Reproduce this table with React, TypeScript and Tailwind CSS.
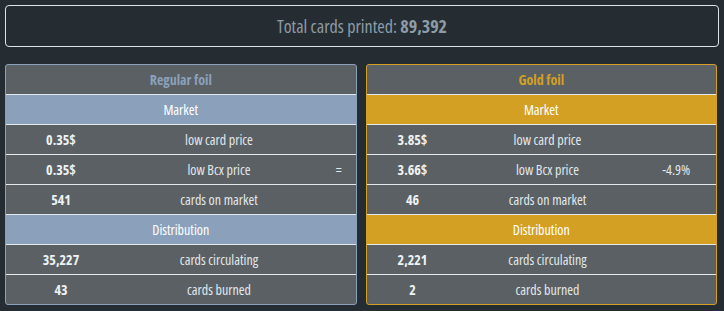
import React from "react";

type Row = { value: string; label: string; change?: string };

interface FoilCardProps {
  title: string;
  gold?: boolean;
  market: Row[];
  distribution: Row[];
  cols: string;
}

function DataRow({ row, cols }: { row: Row; cols: string }) {
  return (
    <div className={`grid ${cols} h-[30px] items-center border-t border-[#e4e8ea] text-[14px]`}>
      <div className="text-center font-bold text-[#eef2f4]">{row.value}</div>
      <div className="text-center text-[#e2e8ec]">{row.label}</div>
      <div className="text-center text-[#e2e8ec]">{row.change}</div>
    </div>
  );
}

function Band({ label, gold }: { label: string; gold?: boolean }) {
  return (
    <div
      className={`flex h-[30px] items-center justify-center border-t border-[#e4e8ea] text-[14px] text-white ${
        gold ? "bg-[#d4a024]" : "bg-[#8ba1bb]"
      }`}
    >
      {label}
    </div>
  );
}

function FoilCard({ title, gold, market, distribution, cols }: FoilCardProps) {
  return (
    <div
      className={`flex-1 overflow-hidden rounded-[3px] border bg-[#5a6063] ${
        gold ? "border-[#d4a024]" : "border-[#8ba1bb]"
      }`}
    >
      <div
        className={`flex h-[29px] items-center justify-center text-[14px] font-bold ${
          gold ? "text-[#d4a024]" : "text-[#8ba1bb]"
        }`}
      >
        {title}
      </div>
      <Band label="Market" gold={gold} />
      {market.map((r) => (
        <DataRow key={r.label} row={r} cols={cols} />
      ))}
      <Band label="Distribution" gold={gold} />
      {distribution.map((r) => (
        <DataRow key={r.label} row={r} cols={cols} />
      ))}
    </div>
  );
}

export default function App() {
  return (
    <div className="min-h-[311px] w-full bg-[#262d32] px-[5px] pt-[5px] font-['Open_Sans',sans-serif] [font-stretch:75%]">
      <div className="flex h-[42px] items-center justify-center rounded-[4px] border border-[#dfe3e6] text-[18px] text-[#8d9ca6]">
        Total cards printed:&nbsp;<span className="font-bold">89,392</span>
      </div>
      <div className="mt-[17px] flex gap-[9px] pr-[2px]">
        <FoilCard
          title="Regular foil"
          cols="grid-cols-[110px_206px_1fr]"
          market={[
            { value: "0.35$", label: "low card price" },
            { value: "0.35$", label: "low Bcx price", change: "=" },
            { value: "541", label: "cards on market" },
          ]}
          distribution={[
            { value: "35,227", label: "cards circulating" },
            { value: "43", label: "cards burned" },
          ]}
        />
        <FoilCard
          title="Gold foil"
          gold
          cols="grid-cols-[92px_178px_1fr]"
          market={[
            { value: "3.85$", label: "low card price" },
            { value: "3.66$", label: "low Bcx price", change: "-4.9%" },
            { value: "46", label: "cards on market" },
          ]}
          distribution={[
            { value: "2,221", label: "cards circulating" },
            { value: "2", label: "cards burned" },
          ]}
        />
      </div>
    </div>
  );
}
